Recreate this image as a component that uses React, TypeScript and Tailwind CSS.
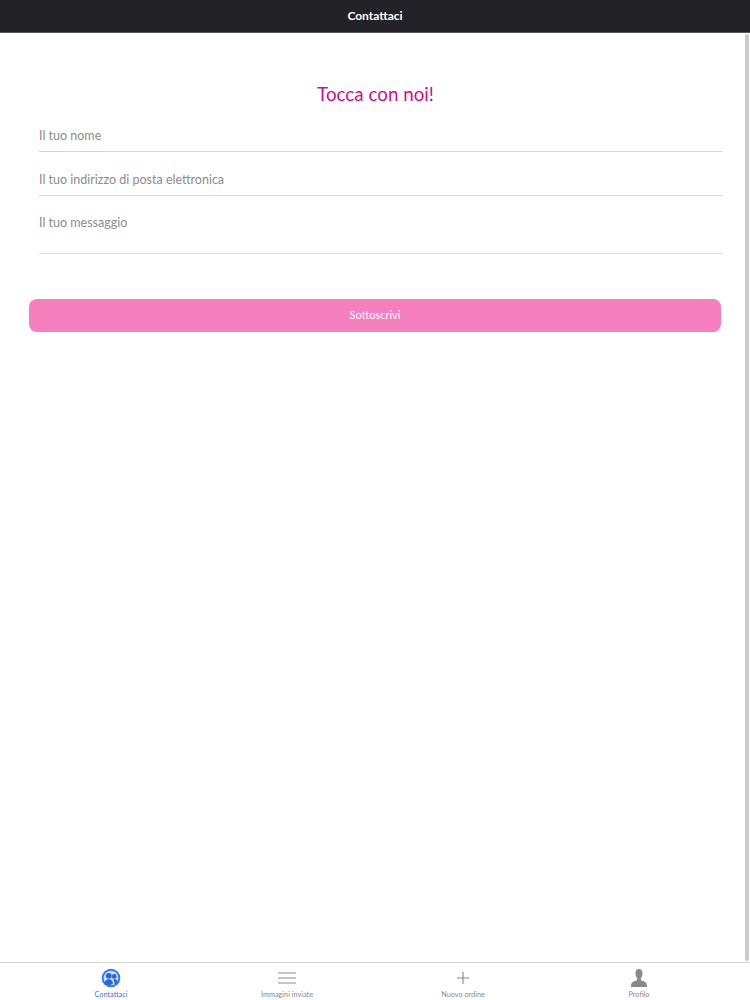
const tabs = [
  { label: "Contattaci", active: true, icon: <ContactsIcon /> },
  { label: "Immagini inviate", active: false, icon: <MenuIcon /> },
  { label: "Nuovo ordine", active: false, icon: <PlusIcon /> },
  { label: "Profilo", active: false, icon: <ProfileIcon /> },
];

function ContactsIcon() {
  return (
    <svg width="20" height="20" viewBox="0 0 20 20">
      <circle cx="10" cy="10" r="9.300" fill="#3478f6" />
      <circle cx="10" cy="10" r="7.300" fill="#cfe0fc" />
      <circle cx="7.800" cy="7.800" r="2.900" fill="#2a66d8" />
      <path d="M3.600 15.400c.3-2.900 2-4.200 4.200-4.200s3.900 1.300 4.200 4.200c-1.100 1-2.500 1.600-4.200 1.600s-3.100-.6-4.200-1.600z" fill="#2a66d8" />
      <circle cx="13.200" cy="8.400" r="2.400" fill="#2a66d8" />
      <path d="M12.300 11.200c.3-.1.600-.2 1-.2 1.800 0 3 1.100 3.300 3.200-.5.900-1.200 1.500-1.800 1.900h-1.200c-.1-1.900-.7-3.600-1.300-4.900z" fill="#2a66d8" />
    </svg>
  );
}

function MenuIcon() {
  return (
    <svg width="18" height="12" viewBox="0 0 18 12" stroke="#8a8a8a" strokeWidth="1.200">
      <path d="M0 1h18M0 6h18M0 11h18" />
    </svg>
  );
}

function PlusIcon() {
  return (
    <svg width="12" height="12" viewBox="0 0 12 12" stroke="#8a8a8a" strokeWidth="1.100">
      <path d="M6 0v12M0 6h12" />
    </svg>
  );
}

function ProfileIcon() {
  return (
    <svg width="18" height="18" viewBox="0 0 18 18" fill="#8a8a8a">
      <path d="M9 0c2.300 0 3.500 1.800 3.500 4.300 0 2-.7 3.900-1.600 5v2c2.200.9 4.700 1.400 5.500 2.900.4.800.6 2 .6 3.800H1c0-1.800.2-3 .6-3.800.8-1.500 3.300-2 5.500-2.900v-2c-.9-1.100-1.600-3-1.600-5C5.500 1.800 6.700 0 9 0z" />
    </svg>
  );
}

export default function App() {
  return (
    <div className="relative flex h-[1000px] flex-col bg-white font-['Lato','Open_Sans',sans-serif]">
      <header className="flex h-[33px] shrink-0 items-center justify-center border-b border-[#55555a] bg-[#222227] text-xs font-bold text-white">
        Contattaci
      </header>

      {/* Scrollbar thumb sits over the content */}
      <div className="absolute top-[34px] right-[1px] h-[927px] w-[4px] rounded-full bg-[#cbcbcb]" />

      <main className="flex-1 pt-[47px] pr-[28px] pl-[29px]">
        <h1 className="text-center text-[18.800px] leading-7 text-[#cc0f8b]">Tocca con noi!</h1>

        <form onSubmit={(e) => e.preventDefault()}>
          <div className="ml-[10px] flex flex-col">
            <input
              placeholder="Il tuo nome"
              className="h-[44px] border-b border-[#d6d6d6] pt-[11px] text-[12.500px] text-[#555] outline-none placeholder:text-[#8c8c8c]"
            />
            <input
              placeholder="Il tuo indirizzo di posta elettronica"
              className="h-[44px] border-b border-[#d6d6d6] pt-[11px] text-[12.500px] text-[#555] outline-none placeholder:text-[#8c8c8c]"
            />
            <textarea
              placeholder="Il tuo messaggio"
              className="h-[58px] resize-none border-b border-[#dedede] pt-[19px] text-[12.500px] leading-4 text-[#555] outline-none placeholder:text-[#8c8c8c]"
            />
          </div>

          <button className="mt-[45px] h-[33px] w-[692px] rounded-lg bg-[#f67fbd] text-[11px] text-white">
            Sottoscrivi
          </button>
        </form>
      </main>

      <nav className="grid h-[38px] shrink-0 grid-cols-4 border-t border-[#d4d4d4] bg-white px-[23px]">
        {tabs.map((tab) => (
          <div key={tab.label} className="flex flex-col items-center pt-[6px]">
            <div className="flex h-[18px] items-center justify-center">{tab.icon}</div>
            <span
              className={`mt-[3px] text-[7.300px] leading-[10px] ${
                tab.active ? "text-[#3478f6]" : "text-[#8a8a8a]"
              }`}
            >
              {tab.label}
            </span>
          </div>
        ))}
      </nav>
    </div>
  );
}
